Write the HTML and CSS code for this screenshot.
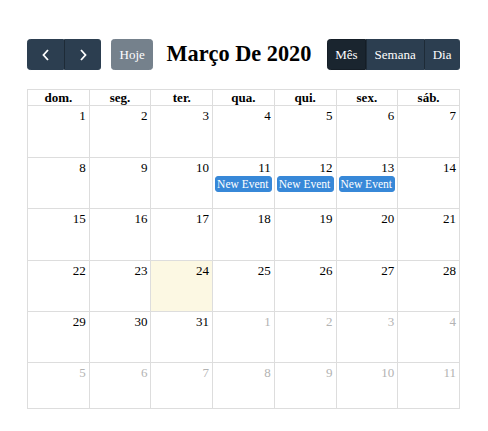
FILE: index.html
```html
<!DOCTYPE html>
<html lang="pt-BR">
<head>
<meta charset="utf-8">
<link rel="stylesheet" href="styles.css">
</head>
<body>
<div class="calendar">
  <div class="toolbar">
    <div class="left">
      <div class="btn-group">
        <button class="btn icon-btn"><svg width="10" height="14" viewBox="0 0 10 14"><path d="M7 2 L2.5 7 L7 12" fill="none" stroke="#fff" stroke-width="1.8"/></svg></button>
        <button class="btn icon-btn"><svg width="10" height="14" viewBox="0 0 10 14"><path d="M3 2 L7.5 7 L3 12" fill="none" stroke="#fff" stroke-width="1.8"/></svg></button>
      </div>
      <button class="btn disabled">Hoje</button>
    </div>
    <h2 class="title">Março De 2020</h2>
    <div class="btn-group">
      <button class="btn active">Mês</button>
      <button class="btn">Semana</button>
      <button class="btn">Dia</button>
    </div>
  </div>
  <table class="grid">
    <thead>
      <tr><th>dom.</th><th>seg.</th><th>ter.</th><th>qua.</th><th>qui.</th><th>sex.</th><th>sáb.</th></tr>
    </thead>
    <tbody>
      <tr class="week tall"><td>1</td><td>2</td><td>3</td><td>4</td><td>5</td><td>6</td><td>7</td></tr>
      <tr class="week"><td>8</td><td>9</td><td>10</td>
        <td>11<div class="event">New Event</div></td>
        <td>12<div class="event">New Event</div></td>
        <td>13<div class="event">New Event</div></td>
        <td>14</td></tr>
      <tr class="week tall"><td>15</td><td>16</td><td>17</td><td>18</td><td>19</td><td>20</td><td>21</td></tr>
      <tr class="week"><td>22</td><td>23</td><td class="today">24</td><td>25</td><td>26</td><td>27</td><td>28</td></tr>
      <tr class="week"><td>29</td><td>30</td><td>31</td><td class="other">1</td><td class="other">2</td><td class="other">3</td><td class="other">4</td></tr>
      <tr class="week last"><td class="other">5</td><td class="other">6</td><td class="other">7</td><td class="other">8</td><td class="other">9</td><td class="other">10</td><td class="other">11</td></tr>
    </tbody>
  </table>
</div>
</body>
</html>
```
FILE: styles.css
```css
html, body {
  margin: 0;
  padding: 0;
  background: #fff;
}
body {
  font-family: "Liberation Serif", "Times New Roman", serif;
  font-size: 13px;
  color: #000;
}
.calendar {
  width: 433px;
  margin: 39px 0 0 27px;
}
.toolbar {
  display: flex;
  align-items: center;
  justify-content: space-between;
  margin-bottom: 19px;
}
.left {
  display: flex;
  align-items: center;
  gap: 10px;
}
.btn-group {
  display: flex;
}
.btn {
  font-family: "Liberation Serif", "Times New Roman", serif;
  font-size: 13px;
  line-height: 19.5px;
  padding: 5px 7.5px;
  background: #2c3e50;
  border: 1px solid #2c3e50;
  color: #fff;
  border-radius: 3.25px;
  margin: 0;
  height: 31px;
  display: flex;
  align-items: center;
}
.btn-group .btn {
  border-radius: 0;
}
.btn-group .btn:first-child {
  border-radius: 3.25px 0 0 3.25px;
}
.btn-group .btn:last-child {
  border-radius: 0 3.25px 3.25px 0;
}
.btn-group .btn + .btn {
  border-left-color: #1e2b37;
}
.icon-btn {
  width: 37px;
  justify-content: center;
  padding: 0;
}
.btn.active {
  background: #1a252f;
  border-color: #151e27;
}
.btn.disabled {
  opacity: 0.65;
}
.title {
  font-size: 22.3px;
  font-weight: bold;
  margin: 0 2px 0 0;
  line-height: 1;
}
.grid {
  width: 433px;
  border-collapse: collapse;
  table-layout: fixed;
}
.grid th {
  border: 1px solid #ddd;
  font-weight: bold;
  text-align: center;
  padding: 0;
  height: 15px;
  line-height: 15px;
}
.grid td {
  border: 1px solid #ddd;
  height: 51px;
  vertical-align: top;
  text-align: right;
  padding: 2px 3px 0 0;
  line-height: 15px;
  box-sizing: border-box;
}
.grid tr.tall td {
  height: 52px;
}
.grid tr.last td {
  height: 46px;
}
.grid td.other {
  color: #b3b3b3;
}
.grid td.today {
  background: #fcf8e3;
}
.event {
  text-align: left;
  background: #3788d8;
  border: 1px solid #3788d8;
  color: #fff;
  font-size: 11.5px;
  line-height: 14px;
  border-radius: 3px;
  margin: 1px -1px 0 2px;
  padding: 0 1px;
  white-space: nowrap;
  overflow: hidden;
}
```
